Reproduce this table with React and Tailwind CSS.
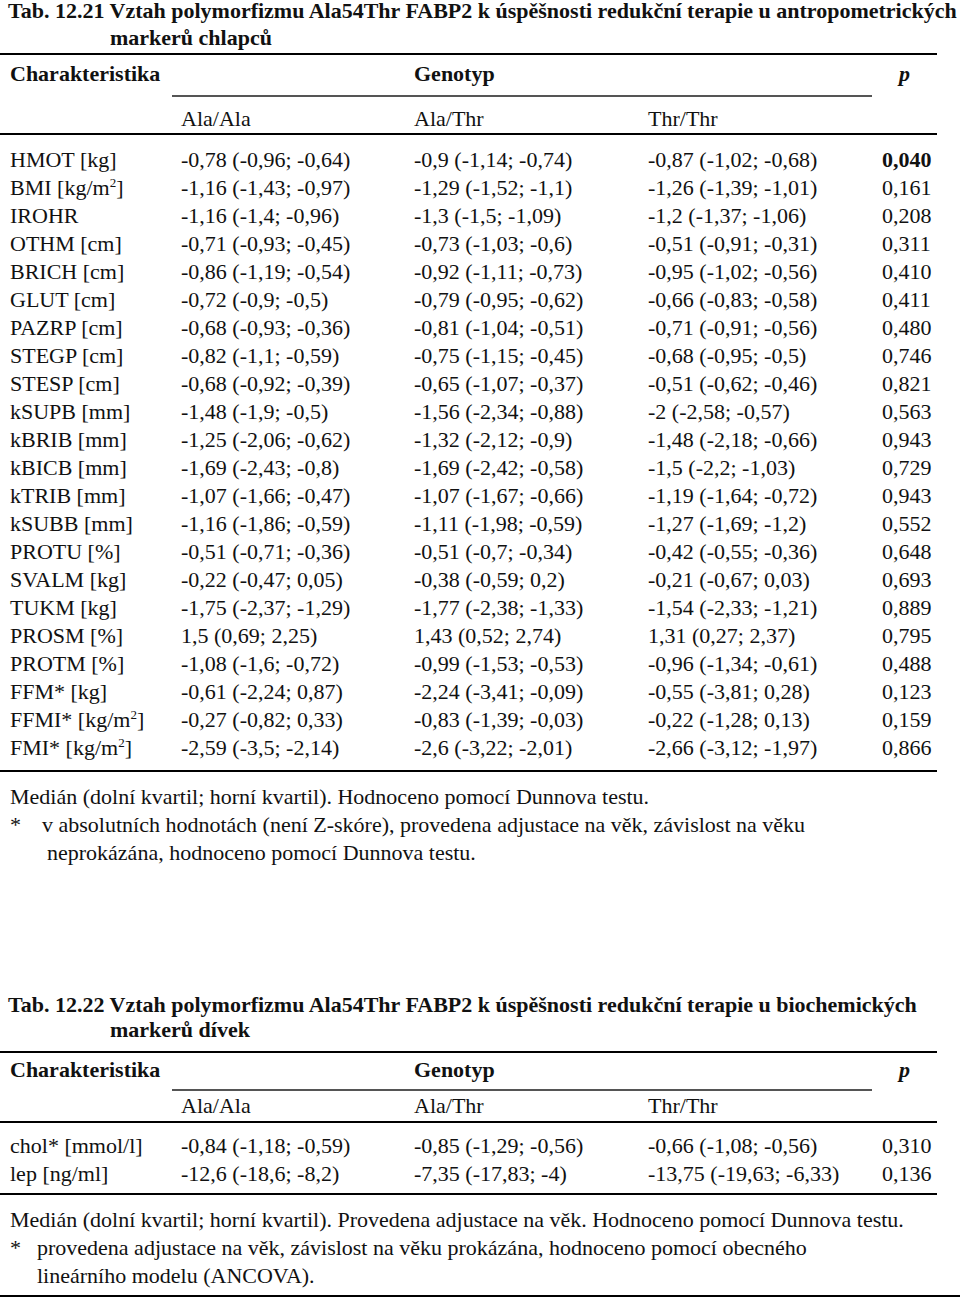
const table1 = [
  [["HMOT [kg]"], "-0,78 (-0,96; -0,64)", "-0,9 (-1,14; -0,74)", "-0,87 (-1,02; -0,68)", "0,040", true],
  [["BMI [kg/m", "2", "]"], "-1,16 (-1,43; -0,97)", "-1,29 (-1,52; -1,1)", "-1,26 (-1,39; -1,01)", "0,161"],
  [["IROHR"], "-1,16 (-1,4; -0,96)", "-1,3 (-1,5; -1,09)", "-1,2 (-1,37; -1,06)", "0,208"],
  [["OTHM [cm]"], "-0,71 (-0,93; -0,45)", "-0,73 (-1,03; -0,6)", "-0,51 (-0,91; -0,31)", "0,311"],
  [["BRICH [cm]"], "-0,86 (-1,19; -0,54)", "-0,92 (-1,11; -0,73)", "-0,95 (-1,02; -0,56)", "0,410"],
  [["GLUT [cm]"], "-0,72 (-0,9; -0,5)", "-0,79 (-0,95; -0,62)", "-0,66 (-0,83; -0,58)", "0,411"],
  [["PAZRP [cm]"], "-0,68 (-0,93; -0,36)", "-0,81 (-1,04; -0,51)", "-0,71 (-0,91; -0,56)", "0,480"],
  [["STEGP [cm]"], "-0,82 (-1,1; -0,59)", "-0,75 (-1,15; -0,45)", "-0,68 (-0,95; -0,5)", "0,746"],
  [["STESP [cm]"], "-0,68 (-0,92; -0,39)", "-0,65 (-1,07; -0,37)", "-0,51 (-0,62; -0,46)", "0,821"],
  [["kSUPB [mm]"], "-1,48 (-1,9; -0,5)", "-1,56 (-2,34; -0,88)", "-2 (-2,58; -0,57)", "0,563"],
  [["kBRIB [mm]"], "-1,25 (-2,06; -0,62)", "-1,32 (-2,12; -0,9)", "-1,48 (-2,18; -0,66)", "0,943"],
  [["kBICB [mm]"], "-1,69 (-2,43; -0,8)", "-1,69 (-2,42; -0,58)", "-1,5 (-2,2; -1,03)", "0,729"],
  [["kTRIB [mm]"], "-1,07 (-1,66; -0,47)", "-1,07 (-1,67; -0,66)", "-1,19 (-1,64; -0,72)", "0,943"],
  [["kSUBB [mm]"], "-1,16 (-1,86; -0,59)", "-1,11 (-1,98; -0,59)", "-1,27 (-1,69; -1,2)", "0,552"],
  [["PROTU [%]"], "-0,51 (-0,71; -0,36)", "-0,51 (-0,7; -0,34)", "-0,42 (-0,55; -0,36)", "0,648"],
  [["SVALM [kg]"], "-0,22 (-0,47; 0,05)", "-0,38 (-0,59; 0,2)", "-0,21 (-0,67; 0,03)", "0,693"],
  [["TUKM [kg]"], "-1,75 (-2,37; -1,29)", "-1,77 (-2,38; -1,33)", "-1,54 (-2,33; -1,21)", "0,889"],
  [["PROSM [%]"], "1,5 (0,69; 2,25)", "1,43 (0,52; 2,74)", "1,31 (0,27; 2,37)", "0,795"],
  [["PROTM [%]"], "-1,08 (-1,6; -0,72)", "-0,99 (-1,53; -0,53)", "-0,96 (-1,34; -0,61)", "0,488"],
  [["FFM* [kg]"], "-0,61 (-2,24; 0,87)", "-2,24 (-3,41; -0,09)", "-0,55 (-3,81; 0,28)", "0,123"],
  [["FFMI* [kg/m", "2", "]"], "-0,27 (-0,82; 0,33)", "-0,83 (-1,39; -0,03)", "-0,22 (-1,28; 0,13)", "0,159"],
  [["FMI* [kg/m", "2", "]"], "-2,59 (-3,5; -2,14)", "-2,6 (-3,22; -2,01)", "-2,66 (-3,12; -1,97)", "0,866"],
];

const table2 = [
  [["chol* [mmol/l]"], "-0,84 (-1,18; -0,59)", "-0,85 (-1,29; -0,56)", "-0,66 (-1,08; -0,56)", "0,310"],
  [["lep [ng/ml]"], "-12,6 (-18,6; -8,2)", "-7,35 (-17,83; -4)", "-13,75 (-19,63; -6,33)", "0,136"],
];

const cols = "grid grid-cols-[181px_233px_234px_234px_1fr]";

function Label({ parts }) {
  return (
    <span>
      {parts[0]}
      {parts[1] && <sup className="text-[13px] -top-[8px]">{parts[1]}</sup>}
      {parts[2]}
    </span>
  );
}

function Row({ row }) {
  const [label, a, b, c, p, bold] = row;
  return (
    <div className={`${cols} h-[28px] whitespace-nowrap`}>
      <div className="pl-[10px]">
        <Label parts={label} />
      </div>
      <div>{a}</div>
      <div>{b}</div>
      <div>{c}</div>
      <div className={bold ? "font-bold" : ""}>{p}</div>
    </div>
  );
}

function Header({ top, gap, second, bottom }) {
  return (
    <div className="border-t-2 border-b-2 border-black">
      <div className={`${cols} font-bold`} style={{ height: gap, paddingTop: top }}>
        <div className="pl-[10px]">Charakteristika</div>
        <div />
        <div>Genotyp</div>
        <div />
        <div className="pl-[17px] italic">p</div>
      </div>
      <div className="ml-[172px] w-[700px] h-[2px] bg-[#555]" />
      <div className={cols} style={{ height: bottom, paddingTop: second }}>
        <div />
        <div>Ala/Ala</div>
        <div>Ala/Thr</div>
        <div>Thr/Thr</div>
        <div />
      </div>
    </div>
  );
}

export default function App() {
  return (
    <div className="w-[960px] h-[1298px] overflow-hidden bg-white text-[#111] [font-family:'Liberation_Serif','Times_New_Roman',serif] text-[22px] leading-[28px]">
      <div className="-mt-[3px] font-bold leading-[27px] whitespace-nowrap">
        <div className="pl-[8px]">
          Tab. 12.21 Vztah polymorfizmu Ala54Thr FABP2 k úspěšnosti redukční terapie u antropometrických
        </div>
        <div className="pl-[110px]">markerů chlapců</div>
      </div>

      <div className="w-[937px] mt-[2px]">
        <Header top={5} gap={40} second={8} bottom={36} />
        <div className="pt-[11px] pb-[8px] border-b-2 border-black">
          {table1.map((r, i) => (
            <Row key={i} row={r} />
          ))}
        </div>
      </div>

      <div className="mt-[11px] whitespace-nowrap">
        <div className="pl-[10px]">Medián (dolní kvartil; horní kvartil). Hodnoceno pomocí Dunnova testu.</div>
        <div className="flex">
          <div className="w-[42px] pl-[10px]">*</div>
          <div>v absolutních hodnotách (není Z-skóre), provedena adjustace na věk, závislost na věku</div>
        </div>
        <div className="pl-[47px]">neprokázána, hodnoceno pomocí Dunnova testu.</div>
      </div>

      <div className="mt-[125px] font-bold leading-[25px] whitespace-nowrap">
        <div className="pl-[8px]">
          Tab. 12.22 Vztah polymorfizmu Ala54Thr FABP2 k úspěšnosti redukční terapie u biochemických
        </div>
        <div className="pl-[110px]">markerů dívek</div>
      </div>

      <div className="w-[937px] mt-[9px]">
        <Header top={3} gap={36} second={1} bottom={30} />
        <div className="pt-[9px] pb-[5px] border-b-2 border-black">
          {table2.map((r, i) => (
            <Row key={i} row={r} />
          ))}
        </div>
      </div>

      <div className="mt-[11px] whitespace-nowrap">
        <div className="pl-[10px]">
          Medián (dolní kvartil; horní kvartil). Provedena adjustace na věk. Hodnoceno pomocí Dunnova testu.
        </div>
        <div className="flex">
          <div className="w-[37px] pl-[10px]">*</div>
          <div>provedena adjustace na věk, závislost na věku prokázána, hodnoceno pomocí obecného</div>
        </div>
        <div className="pl-[37px]">lineárního modelu (ANCOVA).</div>
      </div>

      <div className="mt-[5px] h-[2px] bg-black" />
    </div>
  );
}
